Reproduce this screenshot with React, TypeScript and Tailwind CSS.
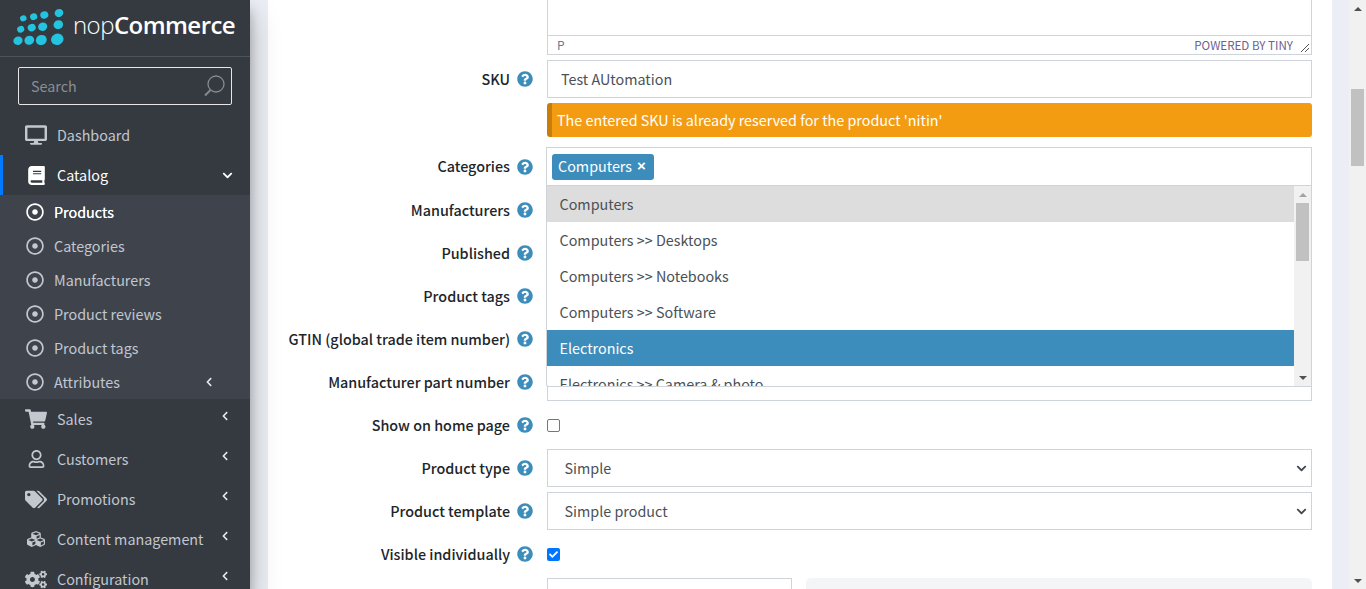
import { FaDesktop, FaBook, FaRegDotCircle, FaShoppingCart, FaRegUser, FaTags, FaCubes, FaCogs, FaQuestionCircle, FaChevronDown, FaChevronLeft, FaCheck } from "react-icons/fa";

const font = "font-['Noto_Sans_CJK_SC','Noto_Sans',sans-serif]";

function Help() {
  return <FaQuestionCircle className="ml-[7px] w-4 h-4 text-[#3c8dbc] shrink-0" />;
}

function Row({ label, children, h = "h-[38px]" }: { label: string; children?: React.ReactNode; h?: string }) {
  return (
    <div className={`flex items-center mb-[5px] ${h}`}>
      <div className="w-[265px] flex items-center justify-end shrink-0">
        <span className="text-[14.35px] leading-none font-medium text-[#212529] whitespace-nowrap">{label}</span>
        <Help />
      </div>
      <div className="ml-[14px] w-[765px] shrink-0">{children}</div>
    </div>
  );
}

function Input({ value = "", select = false }: { value?: string; select?: boolean }) {
  return (
    <div className={`h-[38px] border border-[#ced4da] bg-white flex items-center justify-between text-[14.35px] text-[#495057] ${select ? "pl-[16.5px] pr-[3px]" : "pl-[13px] pr-3"}`}>
      <span>{value}</span>
      {select && <FaChevronDown className="w-[11px] h-[11px] mr-[1px] text-[#3f4650]" />}
    </div>
  );
}

function MainItem({ icon, label, active = false, open = false, plain = false }: { icon: React.ReactNode; label: string; active?: boolean; open?: boolean; plain?: boolean }) {
  return (
    <div className={`relative h-10 flex items-center pl-[25px] pr-[17px] text-[14.35px] shrink-0 ${active ? "text-white" : "text-[#c2c7d0]"}`}>
      {active && <div className="absolute left-0 top-0 bottom-0 w-[3px] bg-[#007bff]" />}
      <span className="w-[22px] flex justify-center">{icon}</span>
      <span className="ml-[10px]">{label}</span>
      {plain ? null : open
        ? <FaChevronDown className="ml-auto w-[11px] h-[11px] text-white" />
        : <FaChevronLeft className="ml-auto mr-[4px] w-[8px] h-[10px] -translate-y-[3px] text-[#e6e8eb]" />}
    </div>
  );
}

function SubItem({ label, active = false, arrow = false }: { label: string; active?: boolean; arrow?: boolean }) {
  return (
    <div className={`h-[34px] flex items-center pl-[26px] text-[14.35px] ${active ? "text-white" : "text-[#c2c7d0]"}`}>
      <FaRegDotCircle className="w-[18px] h-[18px] mr-[10px]" />
      <span className={active ? "[text-shadow:0_0_0.4px_#fff]" : ""}>{label}</span>
      {arrow && <FaChevronLeft className="ml-auto mr-[37px] w-[8px] h-[10px] text-[#e6e8eb]" />}
    </div>
  );
}

function Logo() {
  const dots: [number, number, number][] = [
    [59, 14, 4], [44.3, 16, 3.7], [33.7, 17.7, 3.3], [23.3, 19.3, 3],
    [58.3, 25.7, 4.4], [42.7, 27.7, 4.2], [31.7, 28.7, 3.7], [20.7, 30.3, 3.3],
    [57.3, 40.3, 5.7], [41.3, 41, 5], [29.3, 41.3, 4.5], [18, 41.7, 4.2],
  ];
  return (
    <svg viewBox="13 8 52 42" className="w-[52px] h-[42px] shrink-0">
      {dots.map(([x, y, r], i) => (
        <ellipse key={i} cx={x} cy={y} rx={r * 1.1} ry={r} fill="#22c4e0" transform={`rotate(-20 ${x} ${y})`} />
      ))}
    </svg>
  );
}

export default function App() {
  const opts = ["Computers", "Computers >> Desktops", "Computers >> Notebooks", "Computers >> Software", "Electronics", "Electronics >> Camera & photo"];
  return (
    <div className={`${font} w-[1366px] h-[589px] overflow-hidden flex bg-[#ebeef4]`}>
      {/* Sidebar */}
      <aside className="w-[250px] h-[589px] shrink-0 bg-[#343a40] flex flex-col overflow-hidden shadow-[0_14px_28px_rgba(0,0,0,0.25),0_10px_10px_rgba(0,0,0,0.22)] z-10">
        <div className="h-[57px] shrink-0 border-b border-[#4b545c] flex items-center text-white pl-[13px]">
          <Logo />
          <span className="font-['Open_Sans',sans-serif] text-[24px] tracking-[-0.55px] ml-[8px] -translate-y-[3px] whitespace-nowrap">
            <span className="font-light">nop</span><span className="font-semibold">Commerce</span>
          </span>
        </div>
        <div className="mt-[10px] mx-[18px] h-[38px] shrink-0 border border-[#e6e6e6] rounded-[2px] flex items-center justify-between pl-3 pr-[6px] text-[14.35px] text-[#8a8f96]">
          <span>Search</span>
          <svg viewBox="0 0 22 22" className="w-[22px] h-[22px] text-[#858a90]" fill="none" stroke="currentColor">
            <circle cx="13" cy="9" r="8" strokeWidth="1.3" />
            <path d="M7.5 15 L2 20.5" strokeWidth="2" />
          </svg>
        </div>
        <div className="mt-[10px]">
          <MainItem icon={<FaDesktop className="w-[22px] h-[22px]" />} label="Dashboard" plain />
          <MainItem icon={<FaBook className="w-[17px] h-[19px]" />} label="Catalog" active open />
          <div className="bg-[#3f444c] h-[204px]">
            <SubItem label="Products" active />
            <SubItem label="Categories" />
            <SubItem label="Manufacturers" />
            <SubItem label="Product reviews" />
            <SubItem label="Product tags" />
            <SubItem label="Attributes" arrow />
          </div>
          <MainItem icon={<FaShoppingCart className="w-[22px] h-[20px]" />} label="Sales" />
          <MainItem icon={<FaRegUser className="w-[17px] h-[18px]" />} label="Customers" />
          <MainItem icon={<FaTags className="w-[23px] h-[19px]" />} label="Promotions" />
          <MainItem icon={<FaCubes className="w-[20px] h-[18px]" />} label="Content management" />
          <MainItem icon={<FaCogs className="w-[23px] h-[19px]" />} label="Configuration" />
        </div>
      </aside>

      {/* Main */}
      <main className="ml-[18px] w-[1064px] h-[589px] shrink-0 bg-white overflow-hidden">
        <div className="ml-[279px] w-[765px] h-[55px] border border-t-0 border-[#ced4da] flex flex-col justify-end mb-[5px]">
          <div className="h-[19px] border-t border-[#ced4da] flex items-center justify-between pl-[9px] pr-[1px] text-[12px] text-[#5d7c9c]">
            <span>P</span>
            <span className="flex items-center">
              <span className="text-[#6f5f90] text-[11.6px] translate-y-[1px]">POWERED BY TINY</span>
              <svg viewBox="0 0 10 10" className="w-[10px] h-[10px] ml-[7px] mt-[6px]" stroke="#555" fill="none">
                <path d="M1 9 L9 1 M5 9 L9 5" strokeWidth="1" />
              </svg>
            </span>
          </div>
        </div>

        <Row label="SKU"><Input value="Test AUtomation" /></Row>

        <div className="ml-[279px] w-[765px] h-[34px] bg-[#f39c12] border-l-[5px] border-[#c87f0a] rounded-[3px] flex items-center pl-[5px] text-[14.35px] text-white mb-[10px]">
          The entered SKU is already reserved for the product 'nitin'
        </div>

        <div className="relative">
          <Row label="Categories" h="h-[39px]">
            <div className="-ml-[1px] w-[766px] h-[39px] border border-[#ced4da] bg-white flex items-center pl-[5px]">
              <span className="h-[26px] bg-[#3c8dbc] rounded-[3px] text-white text-[14.35px] leading-[24px] flex items-start pl-[6px] pr-[8px]">
                Computers<span className="ml-[5px] font-['Liberation_Sans',sans-serif] text-[15px] font-bold">×</span>
              </span>
            </div>
          </Row>
          {/* dropdown overlay */}
          <div className="absolute left-[278px] top-[39px] w-[766px] h-[201px] bg-white border-x border-b border-[#ced4da] rounded-bl-[3px] overflow-hidden flex z-20">
            <div className="w-[747px] shrink-0 text-[14.35px] text-[#495057]">
              {opts.map((o, i) => (
                <div key={o} className={`h-9 flex items-center pl-[12.5px] whitespace-nowrap ${i === 0 ? "bg-[#dddddd]" : i === 4 ? "bg-[#3c8dbc] text-white" : ""}`}>{o}</div>
              ))}
            </div>
            <div className="w-[17px] shrink-0 bg-[#f1f1f1] flex flex-col items-center relative">
              <div className="mt-[7px] w-0 h-0 border-x-[4px] border-x-transparent border-b-[4px] border-b-[#a3a3a3]" />
              <div className="mt-[6px] w-[13px] h-[58px] bg-[#c1c1c1]" />
              <div className="absolute bottom-[6px] w-0 h-0 border-x-[4px] border-x-transparent border-t-[4px] border-t-[#505050]" />
            </div>
          </div>
        </div>

        <Row label="Manufacturers"><Input /></Row>
        <Row label="Published"><Input /></Row>
        <Row label="Product tags"><Input /></Row>
        <Row label="GTIN (global trade item number)"><Input /></Row>
        <Row label="Manufacturer part number"><Input /></Row>
        <Row label="Show on home page">
          <div className="w-[13px] h-[13px] border border-[#767676] rounded-[2px] bg-white" />
        </Row>
        <Row label="Product type"><Input value="Simple" select /></Row>
        <Row label="Product template"><Input value="Simple product" select /></Row>
        <Row label="Visible individually">
          <div className="w-[13px] h-[13px] rounded-[2px] bg-[#0075ff] flex items-center justify-center">
            <FaCheck className="w-[9px] h-[9px] text-white" />
          </div>
        </Row>
        <div className="flex">
          <div className="ml-[279px] w-[245px] h-[40px] border border-[#ced4da]" />
          <div className="ml-[14px] w-[506px] h-[40px] bg-[#f4f5f6] rounded-t-[5px]" />
        </div>
      </main>

      {/* Page right gutter and scrollbar */}
      <div className="ml-[17px] w-[17px] h-[589px] shrink-0 bg-[#f1f1f1] flex flex-col items-center relative">
        <div className="mt-[7px] w-0 h-0 border-x-[4px] border-x-transparent border-b-[4px] border-b-[#505050]" />
        <div className="mt-[78px] w-[13px] h-[77px] bg-[#c1c1c1]" />
        <div className="absolute bottom-[6px] w-0 h-0 border-x-[4px] border-x-transparent border-t-[4px] border-t-[#505050]" />
      </div>
    </div>
  );
}
